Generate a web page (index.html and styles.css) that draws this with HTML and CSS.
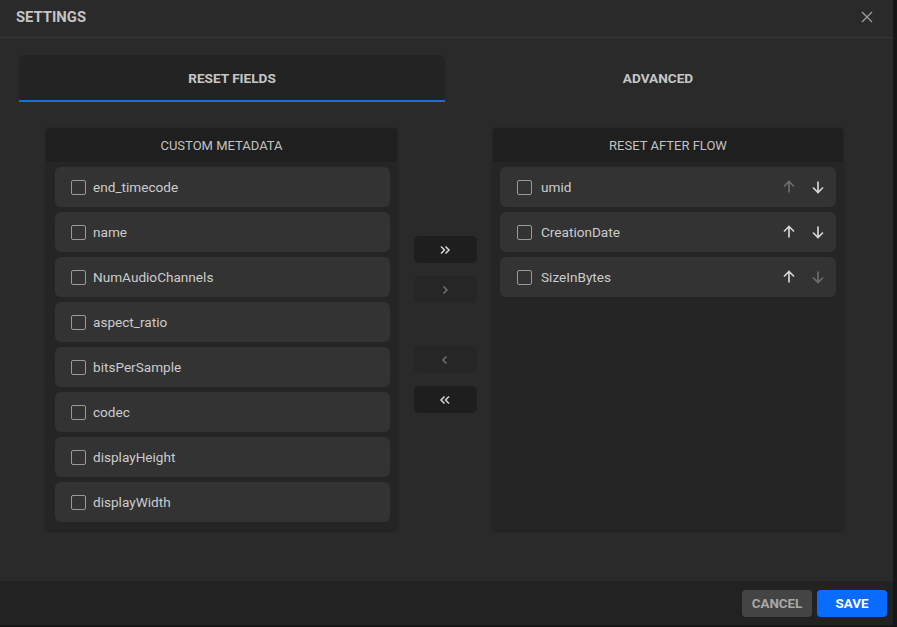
FILE: index.html
```html
<!DOCTYPE html>
<html>
<head>
<meta charset="utf-8">
<link rel="stylesheet" href="styles.css">
</head>
<body>
<div class="dialog">
  <div class="header">
    <span class="title">SETTINGS</span>
    <svg class="close" width="12" height="12" viewBox="0 0 12 12"><path d="M1 1L11 11M11 1L1 11" stroke="#9a9a9a" stroke-width="1.4" fill="none"/></svg>
  </div>
  <div class="body">
    <div class="tabs">
      <div class="tab active">RESET FIELDS</div>
      <div class="tab">ADVANCED</div>
    </div>
    <div class="content">
      <div class="panel">
        <div class="panel-head">CUSTOM METADATA</div>
        <div class="list">
          <div class="item"><span class="cb"></span><span class="label">end_timecode</span></div>
          <div class="item"><span class="cb"></span><span class="label">name</span></div>
          <div class="item"><span class="cb"></span><span class="label">NumAudioChannels</span></div>
          <div class="item"><span class="cb"></span><span class="label">aspect_ratio</span></div>
          <div class="item"><span class="cb"></span><span class="label">bitsPerSample</span></div>
          <div class="item"><span class="cb"></span><span class="label">codec</span></div>
          <div class="item"><span class="cb"></span><span class="label">displayHeight</span></div>
          <div class="item"><span class="cb"></span><span class="label">displayWidth</span></div>
        </div>
      </div>
      <div class="mid">
        <div class="mbtn on"><svg width="12" height="10" viewBox="0 0 12 10"><path d="M2 1.5L5.5 5L2 8.5M6.5 1.5L10 5L6.5 8.5" stroke="#d8d8d8" stroke-width="1.5" fill="none"/></svg></div>
        <div class="mbtn"><svg width="12" height="10" viewBox="0 0 12 10"><path d="M4.5 1.5L8 5L4.5 8.5" stroke="#777" stroke-width="1.4" fill="none"/></svg></div>
        <div class="mbtn gap"><svg width="12" height="10" viewBox="0 0 12 10"><path d="M7.5 1.5L4 5L7.5 8.5" stroke="#777" stroke-width="1.4" fill="none"/></svg></div>
        <div class="mbtn on"><svg width="12" height="10" viewBox="0 0 12 10"><path d="M10 1.5L6.5 5L10 8.5M5.5 1.5L2 5L5.5 8.5" stroke="#d8d8d8" stroke-width="1.5" fill="none"/></svg></div>
      </div>
      <div class="panel right">
        <div class="panel-head">RESET AFTER FLOW</div>
        <div class="list">
          <div class="item"><span class="cb"></span><span class="label">umid</span>
            <span class="arrows"><svg class="dim" width="14" height="14" viewBox="0 0 14 14"><path d="M7 12.5V1.5M2 6.5L7 1.5L12 6.5" stroke="currentColor" stroke-width="1.7" fill="none"/></svg><svg width="14" height="14" viewBox="0 0 14 14"><path d="M7 1.5V12.5M2 7.5L7 12.5L12 7.5" stroke="currentColor" stroke-width="1.7" fill="none"/></svg></span></div>
          <div class="item"><span class="cb"></span><span class="label">CreationDate</span>
            <span class="arrows"><svg width="14" height="14" viewBox="0 0 14 14"><path d="M7 12.5V1.5M2 6.5L7 1.5L12 6.5" stroke="currentColor" stroke-width="1.7" fill="none"/></svg><svg width="14" height="14" viewBox="0 0 14 14"><path d="M7 1.5V12.5M2 7.5L7 12.5L12 7.5" stroke="currentColor" stroke-width="1.7" fill="none"/></svg></span></div>
          <div class="item"><span class="cb"></span><span class="label">SizeInBytes</span>
            <span class="arrows"><svg width="14" height="14" viewBox="0 0 14 14"><path d="M7 12.5V1.5M2 6.5L7 1.5L12 6.5" stroke="currentColor" stroke-width="1.7" fill="none"/></svg><svg class="dim" width="14" height="14" viewBox="0 0 14 14"><path d="M7 1.5V12.5M2 7.5L7 12.5L12 7.5" stroke="currentColor" stroke-width="1.7" fill="none"/></svg></span></div>
        </div>
      </div>
    </div>
  </div>
  <div class="footer">
    <button class="btn cancel">CANCEL</button>
    <button class="btn save">SAVE</button>
  </div>
</div>
</body>
</html>
```

FILE: styles.css
```css
html, body {
  margin: 0;
  padding: 0;
  background: #161616;
  width: 897px;
  height: 627px;
  overflow: hidden;
  font-family: Roboto, "Liberation Sans", sans-serif;
}
.dialog {
  width: 893px;
  height: 625px;
  background: #2a2a2a;
  display: flex;
  flex-direction: column;
}
.header {
  border-bottom: 1px solid #353535;
  display: flex;
  align-items: center;
  justify-content: space-between;
  padding: 0 20px 4px 16px;
  height: 33px;
}
.title {
  color: #c4c4c4;
  font-size: 14.8px;
  font-weight: 700;
}
.body {
  flex: 1;
  padding: 17px 22px 0 19px;
}
.tabs {
  display: flex;
  height: 47px;
}
.tab {
  width: 426px;
  display: flex;
  align-items: center;
  justify-content: center;
  color: #c6c6c6;
  font-size: 13.6px;
  font-weight: 700;
  box-sizing: border-box;
  border-bottom: 2px solid transparent;
}
.tab.active {
  background: #232323;
  border-radius: 6px 6px 0 0;
  border-bottom-color: #1a6fe0;
}
.content {
  display: flex;
  margin-top: 26px;
  padding-left: 27px;
}
.panel {
  width: 351px;
  height: 402px;
  background: #252525;
  border-radius: 4px;
  box-shadow: 0 1px 3px rgba(0,0,0,0.35);
  display: flex;
  flex-direction: column;
  overflow: hidden;
}
.panel.right { width: 350px; }
.panel-head {
  height: 34px;
  background: #1f1f1f;
  color: #c2c2c2;
  font-size: 13px;
  display: flex;
  align-items: center;
  justify-content: center;
  flex-shrink: 0;
}
.list {
  padding: 5px 7px 0 9px;
  display: flex;
  flex-direction: column;
  gap: 5px;
}
.panel.right .list { padding: 5px 7px 0 7px; }
.item {
  height: 40px;
  background: #333333;
  border-radius: 6px;
  display: flex;
  align-items: center;
  padding-left: 16px;
  padding-right: 11px;
}
.cb {
  width: 13px;
  height: 13px;
  border: 1px solid #9a9a9a;
  border-radius: 2px;
  flex-shrink: 0;
}
.label {
  color: #cccccc;
  font-size: 13.6px;
  margin-left: 7px;
  flex: 1;
}
.panel.right .item { padding-left: 17px; }
.panel.right .label { margin-left: 9px; }
.arrows {
  display: flex;
  gap: 15px;
  color: #d4d4d4;
}
.arrows .dim { color: #6c6c6c; }
.mid {
  width: 96px;
  display: flex;
  flex-direction: column;
  align-items: center;
  padding-top: 108px;
}
.mbtn {
  width: 63px;
  height: 27px;
  border-radius: 5px;
  background: #262626;
  display: flex;
  align-items: center;
  justify-content: center;
  margin-bottom: 13px;
}
.mbtn.on { background: #1e1e1e; }
.mbtn.gap { margin-top: 30px; }
.footer {
  height: 44px;
  background: #222222;
  display: flex;
  align-items: center;
  justify-content: flex-end;
  padding-right: 6px;
  gap: 5px;
}
.btn {
  height: 27px;
  width: 70px;
  border: none;
  border-radius: 4px;
  font-family: Roboto, "Liberation Sans", sans-serif;
  font-size: 13.4px;
  font-weight: 700;
  padding: 0;
}
.cancel { background: #444444; color: #a8a8a8; }
.save { background: #0a6cff; color: #ffffff; }
```
